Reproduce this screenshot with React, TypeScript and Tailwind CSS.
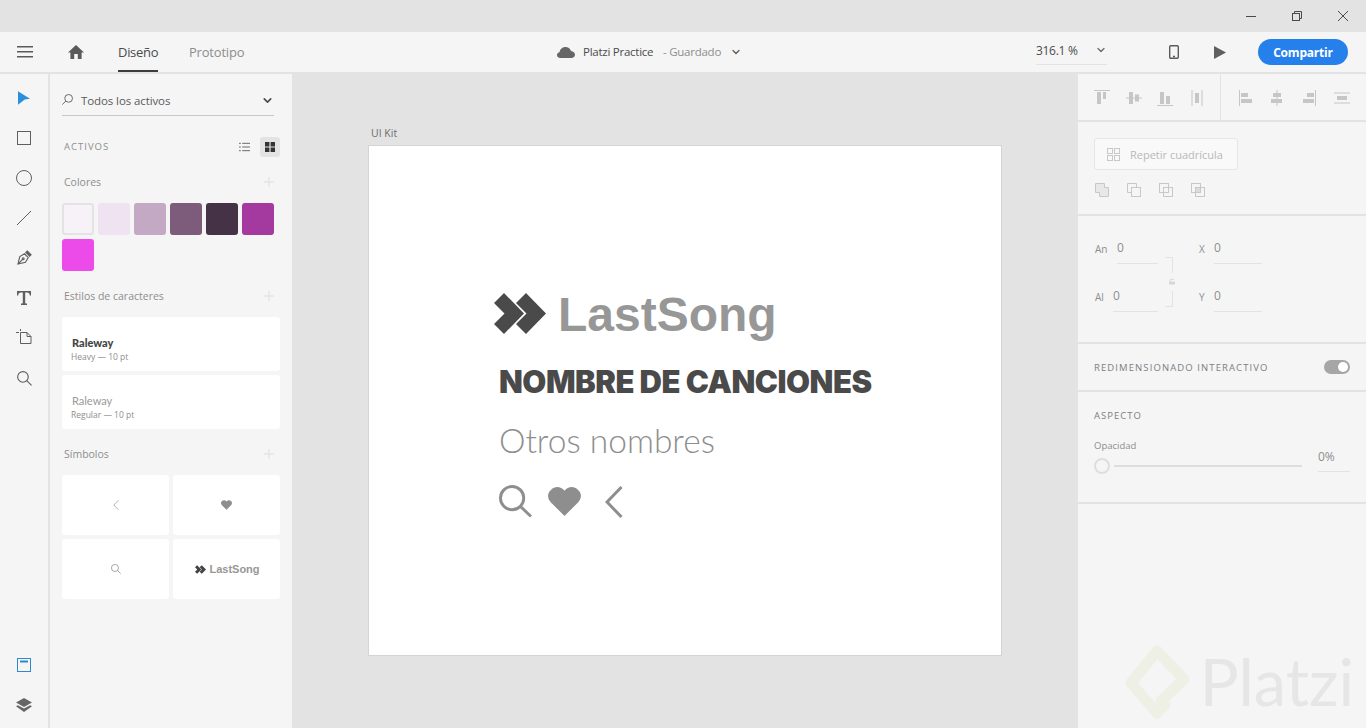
import { ReactNode } from "react";
import { ChevronDown } from "lucide-react";

const swatches = [
  "bg-[#f7f1f8] border-2 border-[#e3e3e3]",
  "bg-[#f0e3f1]",
  "bg-[#c4a9c4]",
  "bg-[#7d5b7a]",
  "bg-[#453246]",
  "bg-[#a43a9f]",
  "bg-[#ec4bea]",
];

const Chevrons = ({ className }: { className: string }) => (
  <svg viewBox="0 0 52 41" className={className} fill="currentColor">
    <path d="M0 10 L10 0 L30 20.5 L10 41 L0 31 L10.5 20.5 Z" />
    <path d="M22 10 L32 0 L52 20.5 L32 41 L22 31 L32.5 20.5 Z" />
  </svg>
);

const Search = ({ className, width = 1.5 }: { className: string; width?: number }) => (
  <svg viewBox="0 0 34 34" className={className} fill="none" stroke="currentColor" strokeWidth={width}>
    <circle cx="13.5" cy="13.5" r="12" />
    <path d="M22 22 L33 32.5" />
  </svg>
);

const Heart = ({ className }: { className: string }) => (
  <svg viewBox="0 0 34 30" className={className} fill="currentColor">
    <path d="M17 30 L3 16 C-1 12 -1 6 3 3 C7 -1 13 -1 17 4 C21 -1 27 -1 31 3 C35 6 35 12 31 16 Z" />
  </svg>
);

const Back = ({ className, width = 3 }: { className: string; width?: number }) => (
  <svg viewBox="0 0 18 32" className={className} fill="none" stroke="currentColor" strokeWidth={width}>
    <path d="M16.5 1 L2 16 L16.5 31" />
  </svg>
);

const Plus = () => (
  <svg viewBox="0 0 10 10" className="w-[10px] h-[10px] text-[#dedede]" stroke="currentColor" fill="none">
    <path d="M5 0 V10 M0 5 H10" />
  </svg>
);

const tools: ReactNode[] = [
  <svg viewBox="0 0 16 18" className="w-[12px] h-[16px]" fill="#2b8fdc"><path d="M0 0 L16 10 L9 11 L0 18 Z" /></svg>,
  <svg viewBox="0 0 14 14" className="w-[14px] h-[14px]" fill="none" stroke="#5f5f5f"><rect x="0.5" y="0.5" width="13" height="13" /></svg>,
  <svg viewBox="0 0 16 16" className="w-4 h-4" fill="none" stroke="#5f5f5f"><circle cx="8" cy="8" r="7.5" /></svg>,
  <svg viewBox="0 0 14 14" className="w-[14px] h-[14px]" fill="none" stroke="#5f5f5f"><path d="M0 14 L14 0" /></svg>,
  <svg viewBox="0 0 16 16" className="w-[15px] h-[15px] -mt-[2px]" fill="none" stroke="#5f5f5f" strokeWidth="1.2"><path d="M1 15 L3 7 L8 4 L12 8 L9 13 Z M1 15 L6 10" /><circle cx="6.6" cy="9.4" r="1" /><path d="M9 3 L11 1 L15 5 L13 7" fill="#5f5f5f" /></svg>,
  <svg viewBox="0 0 14 14" className="w-[14px] h-[14px]" fill="#5f5f5f"><path d="M0 0 H14 V4.5 H12.8 C12.6 2.6 12 1.6 10 1.6 H8.2 V11.8 C8.2 12.4 8.7 12.6 10 12.6 V14 H4 V12.6 C5.3 12.6 5.8 12.4 5.8 11.8 V1.6 H4 C2 1.6 1.4 2.6 1.2 4.5 H0 Z" /></svg>,
  <svg viewBox="0 0 16 16" className="w-4 h-4 -mt-[2px]" fill="none" stroke="#5f5f5f"><path d="M4.5 3.5 H11 L15 7.5 V14.5 H4.5 Z M11 3.5 V7.5 H15" /><path d="M0 3.5 H3 M4.5 0 V2" /></svg>,
  <Search className="w-[15px] h-[15px] text-[#5f5f5f]" width={2.6} />,
];

const alignIcons: ReactNode[] = [
  <><path d="M0 .5 H16" /><rect x="3" y="2" width="4" height="12" fill="#c6c6c6" stroke="none" /><rect x="9" y="2" width="3" height="7" fill="#c6c6c6" stroke="none" /></>,
  <><path d="M0 8 H16" /><rect x="3" y="2" width="4" height="12" fill="#c6c6c6" stroke="none" /><rect x="9" y="4.5" width="4" height="7" fill="#c6c6c6" stroke="none" /></>,
  <><path d="M0 15.5 H16" /><rect x="3" y="2" width="4" height="12" fill="#c6c6c6" stroke="none" /><rect x="9" y="6" width="4" height="8" fill="#c6c6c6" stroke="none" /></>,
  <><path d="M3 0 V16 M13 0 V16" /><rect x="6" y="3" width="4" height="10" fill="#c6c6c6" stroke="none" /></>,
];

const alignIconsRight: ReactNode[] = [
  <><path d="M.5 0 V16" /><rect x="2" y="3" width="7" height="4" fill="#c6c6c6" stroke="none" /><rect x="2" y="9" width="11" height="4" fill="#c6c6c6" stroke="none" /></>,
  <><path d="M6 0 V16" /><rect x="2" y="3" width="8" height="4" fill="#c6c6c6" stroke="none" /><rect x="0" y="9" width="11" height="4" fill="#c6c6c6" stroke="none" /></>,
  <><path d="M13.5 0 V16" /><rect x="5" y="3" width="7" height="4" fill="#c6c6c6" stroke="none" /><rect x="1" y="9" width="11" height="4" fill="#c6c6c6" stroke="none" /></>,
  <><path d="M0 3 H16 M0 13 H16" /><rect x="3" y="6" width="10" height="4" fill="#c6c6c6" stroke="none" /></>,
];

const boolIcons: ReactNode[] = [
  <path d="M.5 .5 H9.5 V4.5 H13.5 V13.5 H4.5 V9.5 H.5 Z" fill="#e8e8e8" />,
  <><path d="M.5 .5 H9.5 V4.5 H4.5 V9.5 H.5 Z" /><rect x="4.5" y="4.5" width="9" height="9" /></>,
  <><rect x=".5" y=".5" width="9" height="9" /><rect x="4.5" y="4.5" width="9" height="9" /></>,
  <><rect x=".5" y=".5" width="9" height="9" /><rect x="4.5" y="4.5" width="9" height="9" /><rect x="4.5" y="4.5" width="5" height="5" fill="#dcdcdc" /></>,
];

const Section = ({ title, className }: { title: string; className: string }) => (
  <div className={`flex items-center justify-between pl-[2px] pr-[6px] ${className}`}>
    <span className="pt-[2px] text-[10.5px] text-[#8e8e8e]">{title}</span>
    <Plus />
  </div>
);

const Field = ({ label, value, labelWidth, width }: { label: string; value: string; labelWidth: string; width: string }) => (
  <div className="flex items-start">
    <span className={`text-[10px] text-[#8e8e8e] pt-[10px] ${labelWidth}`}>{label}</span>
    <div className={`h-[32px] border-b border-[#e3e3e3] text-[12px] leading-[16px] text-[#8e8e8e] pt-[8px] box-border ${width}`}>{value}</div>
  </div>
);

export default function App() {
  return (
    <div className="flex flex-col h-screen w-screen overflow-hidden bg-[#e3e3e3] font-['Open_Sans','Noto_Sans',sans-serif]">
      {/* Title bar */}
      <div className="h-8 shrink-0 flex justify-end items-center pr-[18px] gap-[36px] text-[#4a4a4a]">
        <svg viewBox="0 0 10 10" className="w-[10px] h-[10px]" stroke="currentColor" fill="none"><path d="M0 5.5 H10" /></svg>
        <svg viewBox="0 0 10 10" className="w-[10px] h-[10px]" stroke="currentColor" fill="none"><rect x=".5" y="2.5" width="7" height="7" /><path d="M2.5 2.5 V.5 H9.5 V7.5 H7.5" /></svg>
        <svg viewBox="0 0 10 10" className="w-[10px] h-[10px]" stroke="currentColor" fill="none"><path d="M0 0 L10 10 M10 0 L0 10" /></svg>
      </div>

      {/* Top bar */}
      <div className="h-10 shrink-0 bg-[#f5f5f5] flex items-center">
        <svg viewBox="0 0 16 12" className="ml-[17px] w-4 h-3" fill="#5a5a5a"><path d="M0 0 H16 V1.6 H0 Z M0 5 H16 V6.6 H0 Z M0 10 H16 V11.6 H0 Z" /></svg>
        <svg viewBox="0 0 16 14" className="ml-[35px] w-4 h-[14px]" fill="#5a5a5a"><path d="M8 0 L16 7.5 H13.6 V14 H9.8 V9 H6.2 V14 H2.4 V7.5 H0 Z" /></svg>
        <div className="ml-[34px] w-[40px] h-10 relative flex items-center pt-[2px] text-[13px] text-[#4b4b4b] tracking-[-0.3px]">
          Diseño
          <div className="absolute left-0 bottom-0 w-full h-[2px] bg-[#3c3c3c]" />
        </div>
        <span className="ml-[31px] w-[55px] pt-[2px] text-[13px] text-[#8e8e8e] tracking-[-0.2px]">Prototipo</span>
        <svg viewBox="0 0 18 11" className="ml-[313px] w-[18px] h-[11px]" fill="#666"><path d="M3.5 11 C1.5 11 0 9.8 0 8 C0 6.5 1 5.4 2.6 5.2 C3 2.2 5.4 0 8.4 0 C11 0 13.2 1.6 14 4 C16.4 4.2 18 5.8 18 7.8 C18 9.8 16.4 11 14.4 11 Z" /></svg>
        <span className="ml-[8px] w-[80px] text-[11.5px] text-[#4b4b4b] tracking-[-0.25px] whitespace-nowrap">Platzi Practice</span>
        <span className="w-[67px] text-[11.5px] text-[#8e8e8e] tracking-[-0.25px] whitespace-nowrap">- Guardado</span>
        <ChevronDown className="w-[12px] h-[12px] text-[#5a5a5a]" strokeWidth={2.5} />
        <div className="ml-[294px] w-[71px] h-[24px] mt-[2px] border-b border-[#e3e3e3] flex items-start justify-between">
          <span className="pt-px text-[12px] text-[#4b4b4b] tracking-[-0.3px] whitespace-nowrap">316.1 %</span>
          <ChevronDown className="w-[12px] h-[12px] text-[#6a6a6a] mt-[3px]" strokeWidth={2.5} />
        </div>
        <svg viewBox="0 0 10 14" className="ml-[62px] w-[10px] h-[14px]" fill="none" stroke="#5a5a5a" strokeWidth="1.4"><rect x=".7" y=".7" width="8.6" height="12.6" rx="1" /><path d="M4 11.5 H6" /></svg>
        <svg viewBox="0 0 12 13" className="ml-[35px] w-3 h-[13px]" fill="#5f5f5f"><path d="M0 0 L12 6.5 L0 13 Z" /></svg>
        <button className="ml-[32px] w-[90px] h-[26px] pt-px rounded-full bg-[#2680eb] text-white text-[12px] font-bold tracking-[-0.2px]">Compartir</button>
      </div>

      <div className="flex flex-1 min-h-0 mt-[2px]">
        {/* Tools */}
        <div className="w-[48px] shrink-0 bg-[#f5f5f5] flex flex-col justify-between pt-1 pb-[3px]">
          <div className="flex flex-col">
            {tools.map((icon, i) => (
              <div key={i} className="h-10 flex items-center justify-center">{icon}</div>
            ))}
          </div>
          <div className="flex flex-col">
            <div className="h-10 flex items-center justify-center">
              <svg viewBox="0 0 14 14" className="w-[14px] h-[14px]" fill="none" stroke="#2d8ac9"><rect x=".5" y=".5" width="13" height="13" /><path d="M3 3.5 H11" strokeWidth="2" /></svg>
            </div>
            <div className="h-10 flex items-center justify-center">
              <svg viewBox="0 0 16 14" className="w-4 h-[14px]" fill="#666"><path d="M8 0 L16 4.5 L8 9 L0 4.5 Z" /><path d="M0 8.2 L1.8 7.2 L8 10.6 L14.2 7.2 L16 8.2 L8 14 Z" /></svg>
            </div>
          </div>
        </div>

        {/* Assets */}
        <div className="w-[242px] shrink-0 ml-[2px] bg-[#f5f5f5] px-3 pt-[16px]">
          <div className="h-[26px] w-[212px] border-b border-[#c8c8c8] flex items-start">
            <Search className="w-[11px] h-[11px] mt-[4px] -scale-x-100 text-[#666]" width={3} />
            <span className="ml-[8px] text-[11.5px] leading-[21px] text-[#5a5a5a] tracking-[-0.1px]">Todos los activos</span>
            <ChevronDown className="ml-auto mt-[4px] w-[13px] h-[13px] text-[#4a4a4a]" strokeWidth={3} />
          </div>
          <div className="mt-[21px] flex items-center justify-between h-5 pl-[2px]">
            <span className="text-[9.5px] tracking-[1px] text-[#8e8e8e]">ACTIVOS</span>
            <div className="flex items-center gap-[4px]">
              <svg viewBox="0 0 12 10" className="w-[11px] h-[10px]" fill="none" stroke="#5f5f5f"><path d="M3.5 1 H12 M3.5 5 H12 M3.5 9 H12 M0 1 H2 M0 5 H2 M0 9 H2" /></svg>
              <div className="ml-[6px] w-5 h-5 rounded-[3px] bg-[#e3e3e3] flex items-center justify-center">
                <svg viewBox="0 0 10 10" className="w-[10px] h-[10px]" fill="#333"><path d="M0 0 H4.4 V4.4 H0 Z M5.6 0 H10 V4.4 H5.6 Z M0 5.6 H4.4 V10 H0 Z M5.6 5.6 H10 V10 H5.6 Z" /></svg>
              </div>
            </div>
          </div>
          <Section title="Colores" className="mt-[15px] h-[20px]" />
          <div className="mt-[11px] w-[216px] flex flex-wrap gap-1">
            {swatches.map((c) => (
              <div key={c} className={`w-8 h-8 rounded-[3px] ${c}`} />
            ))}
          </div>
          <Section title="Estilos de caracteres" className="mt-[15px] h-[20px]" />
          <div className="mt-[11px] w-[218px] flex flex-col gap-1">
            <div className="h-[54px] rounded-[3px] bg-white pl-[9px] pt-[19px]">
              <div className="pl-px text-[11px] leading-[14px] font-black text-[#444] font-['Lato',sans-serif]">Raleway</div>
              <div className="text-[8.5px] leading-[12px] text-[#8e8e8e] mt-[1px]">Heavy — 10 pt</div>
            </div>
            <div className="h-[54px] rounded-[3px] bg-white pl-[9px] pt-[19px]">
              <div className="pl-px text-[11px] leading-[14px] text-[#999] font-['Lato',sans-serif]">Raleway</div>
              <div className="text-[8.5px] leading-[12px] text-[#8e8e8e] mt-[1px]">Regular — 10 pt</div>
            </div>
          </div>
          <Section title="Símbolos" className="mt-[15px] h-[20px]" />
          <div className="mt-[11px] w-[218px] grid grid-cols-2 gap-1">
            <div className="h-[60px] rounded-[3px] bg-white flex items-center justify-center">
              <Back className="w-[6px] h-[10px] text-[#9a9a9a]" width={2.4} />
            </div>
            <div className="h-[60px] rounded-[3px] bg-white flex items-center justify-center">
              <Heart className="w-[11px] h-[10px] text-[#8e8e8e]" />
            </div>
            <div className="h-[60px] rounded-[3px] bg-white flex items-center justify-center">
              <Search className="w-[10px] h-[10px] text-[#9a9a9a]" width={3} />
            </div>
            <div className="h-[60px] rounded-[3px] bg-white flex items-center justify-center gap-[3px] pl-[2px]">
              <Chevrons className="w-[11px] h-[9px] text-[#444]" />
              <span className="text-[11px] font-bold text-[#979797] font-['Liberation_Sans',sans-serif]">LastSong</span>
            </div>
          </div>
        </div>

        {/* Canvas */}
        <div className="flex-1 min-w-0 pl-[76px] pt-[52px]">
          <div className="pl-[3px] text-[10.5px] leading-[14px] text-[#6e6e6e]">UI Kit</div>
          <div className="mt-[6px] -translate-y-px w-[634px] h-[511px] bg-white border border-[#d4d4d4] pl-[130px] pt-[146px]">
            <div className="flex items-center -ml-[5px] h-[42px]">
              <Chevrons className="w-[52px] h-[41px] text-[#4a4a4a]" />
              <span className="ml-[12px] pt-[4px] text-[48px] leading-[42px] font-bold text-[#979797] font-['Liberation_Sans',sans-serif]">LastSong</span>
            </div>
            <div className="mt-[28px] text-[31px] leading-[40px] font-black tracking-[-0.5px] text-[#4a4a4a] font-['Inter',sans-serif] whitespace-nowrap">NOMBRE DE CANCIONES</div>
            <div className="mt-[18px] text-[33.5px] leading-[40px] font-light text-[#8e8e8e] font-['Lato',sans-serif]">Otros nombres</div>
            <div className="mt-[25px] flex items-center">
              <Search className="w-[33px] h-[33px] text-[#8e8e8e]" width={3} />
              <Heart className="ml-[16px] w-[33px] h-[29px] text-[#8e8e8e]" />
              <Back className="ml-[24px] w-[18px] h-[32px] text-[#8e8e8e]" />
            </div>
          </div>
        </div>

        {/* Properties */}
        <div className="w-[288px] shrink-0 bg-[#f5f5f5] flex flex-col relative">
          <div className="h-[48px] shrink-0 flex items-center border-b-2 border-[#e3e3e3]">
            <div className="w-[143px] h-full flex items-center justify-between pl-4 pr-[15px] pt-[2px] border-r border-[#e3e3e3]">
              {alignIcons.map((icon, i) => (
                <svg key={i} viewBox="0 0 16 16" className="w-4 h-4" fill="none" stroke="#c6c6c6">{icon}</svg>
              ))}
            </div>
            <div className="flex-1 flex items-center justify-between pl-[18px] pr-4 pt-[2px]">
              {alignIconsRight.map((icon, i) => (
                <svg key={i} viewBox="0 0 16 16" className="w-4 h-4" fill="none" stroke="#c6c6c6">{icon}</svg>
              ))}
            </div>
          </div>

          <div className="h-[94px] shrink-0 border-b-2 border-[#e3e3e3] pl-4 pt-[16px]">
            <div className="w-[144px] h-[32px] rounded-[3px] bg-[#f9f9f9] border border-[#e6e6e6] flex items-center pl-3">
              <svg viewBox="0 0 13 13" className="w-[13px] h-[13px]" fill="none" stroke="#c8c8c8"><rect x=".5" y=".5" width="5" height="5" /><rect x="7.5" y=".5" width="5" height="5" /><rect x=".5" y="7.5" width="5" height="5" /><rect x="7.5" y="7.5" width="5" height="5" /></svg>
              <span className="ml-[10px] pt-[2px] text-[11px] text-[#b8b8b8] whitespace-nowrap">Repetir cuadrícula</span>
            </div>
            <div className="mt-[13px] flex gap-[18px] pl-[1px]">
              {boolIcons.map((icon, i) => (
                <svg key={i} viewBox="0 0 14 14" className="w-[14px] h-[14px]" fill="none" stroke="#c8c8c8">{icon}</svg>
              ))}
            </div>
          </div>

          <div className="h-[128px] shrink-0 border-b-2 border-[#e3e3e3] pl-[17px] pt-[16px] flex">
            <div className="w-[63px] flex flex-col gap-4">
              <Field label="An" value="0" labelWidth="w-[22px]" width="w-[41px]" />
              <Field label="Al" value="0" labelWidth="w-[18px]" width="w-[45px]" />
            </div>
            <div className="ml-[7px] w-[8px] h-[50px] mt-[25px] relative border-y border-r border-[#e3e3e3]">
              <svg viewBox="0 0 8 9" className="absolute -right-[4px] top-[15px] w-[8px] h-[18px] bg-[#f5f5f5]" fill="#d6d6d6"><path d="M1 4 H7 V7 H1 Z" /><path d="M2 4 V2.5 C2 1.5 6 1.5 6 2.5" fill="none" stroke="#d6d6d6" /></svg>
            </div>
            <div className="ml-[26px] flex flex-col gap-4">
              <Field label="X" value="0" labelWidth="w-[15px]" width="w-[48px]" />
              <Field label="Y" value="0" labelWidth="w-[15px]" width="w-[48px]" />
            </div>
          </div>

          <div className="h-[48px] shrink-0 border-b-2 border-[#e3e3e3] flex items-center justify-between pl-4 pr-4">
            <span className="pt-[2px] text-[9.5px] tracking-[1.1px] text-[#7e7e7e] whitespace-nowrap">REDIMENSIONADO INTERACTIVO</span>
            <div className="w-[26px] h-[14px] rounded-full bg-[#a6a6a6] flex items-center justify-end pr-[2px]">
              <div className="w-[10px] h-[10px] rounded-full bg-white" />
            </div>
          </div>

          <div className="h-[112px] shrink-0 border-b-2 border-[#e3e3e3] pl-4 pr-4 pt-[17px]">
            <div className="text-[9.5px] leading-[14px] tracking-[1px] text-[#7e7e7e]">ASPECTO</div>
            <div className="mt-[17px] text-[9.5px] leading-[12px] text-[#8e8e8e]">Opacidad</div>
            <div className="flex items-start -mt-[3px]">
              <div className="flex flex-1 items-center mt-[9px]">
                <div className="w-4 h-4 rounded-full border-2 border-[#dedede]" />
                <div className="ml-[4px] w-[188px] h-[2px] bg-[#dedede]" />
              </div>
              <div className="w-8 h-[23px] border-b border-[#e3e3e3] text-[12px] leading-[16px] text-[#8e8e8e]">0%</div>
            </div>
          </div>

          {/* Watermark */}
          <div className="absolute right-[12px] bottom-[7px] h-[76px] flex items-start">
            <svg viewBox="0 0 64 76" className="w-[64px] h-[76px]" fill="none" stroke="#eef0e6" strokeWidth="11" strokeLinecap="round">
              <path d="M40 60 L32 68 L6 38 L32 6 L59 34 L36 56" strokeLinejoin="round" />
            </svg>
            <span className="ml-[11px] -mt-[2px] text-[65px] leading-[76px] text-[#e6e6e6] font-['Lato',sans-serif]">Platzi</span>
          </div>
        </div>
      </div>
    </div>
  );
}
